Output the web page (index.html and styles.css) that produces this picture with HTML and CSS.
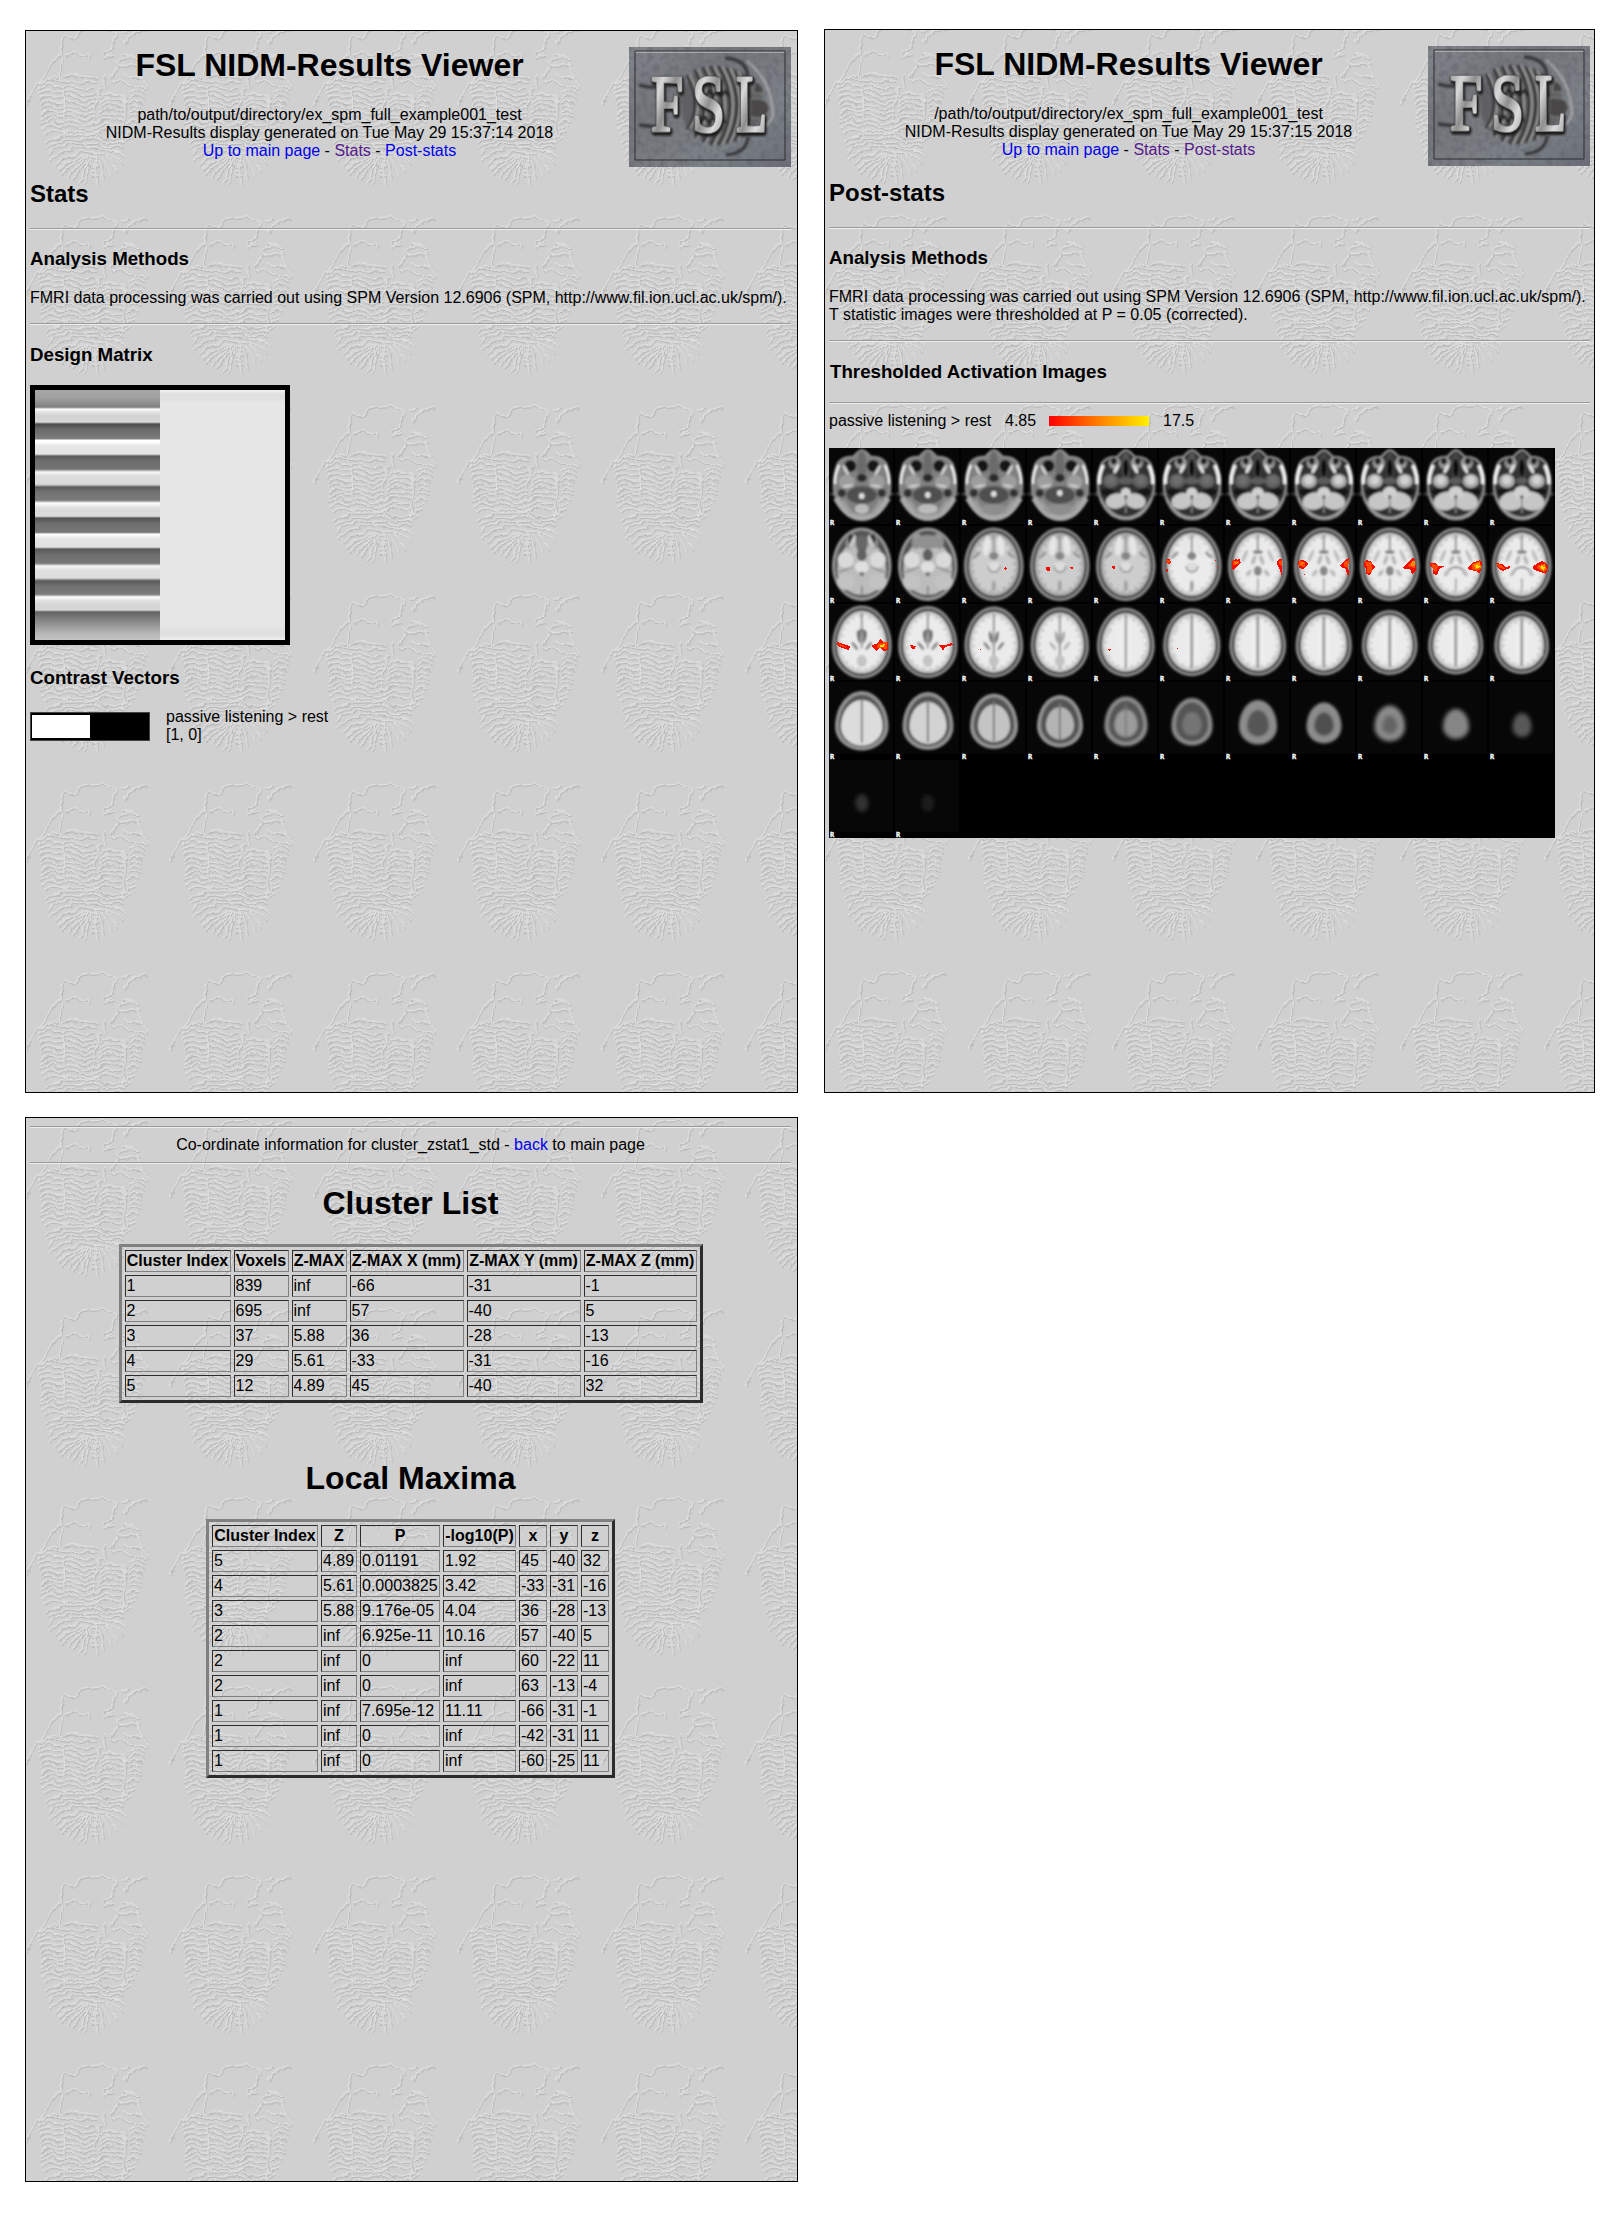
FILE: index.html
```html
<!DOCTYPE html>
<html lang="en">
<head>
<meta charset="utf-8">
<title>FSL NIDM-Results Viewer</title>
<link rel="stylesheet" href="styles.css">
</head>
<body>
<svg class="defs" width="0" height="0" aria-hidden="true">
  <defs>
    <linearGradient id="stone" x1="0" y1="0" x2="1" y2="1">
      <stop offset="0" stop-color="#82848c"/><stop offset=".35" stop-color="#74767b"/><stop offset=".7" stop-color="#7d8288"/><stop offset="1" stop-color="#6a6d77"/>
    </linearGradient>
    <linearGradient id="metal" x1="0" y1="0" x2="1" y2="1">
      <stop offset="0" stop-color="#888"/><stop offset=".3" stop-color="#d8d8d8"/><stop offset=".5" stop-color="#8e8e8e"/><stop offset=".7" stop-color="#dcdcdc"/><stop offset="1" stop-color="#8c8c8c"/>
    </linearGradient>
    <filter id="grain" x="0" y="0" width="100%" height="100%">
      <feTurbulence type="fractalNoise" baseFrequency=".16" numOctaves="3" seed="4"/>
      <feColorMatrix values="0 0 0 0 .12  0 0 0 0 .13  0 0 0 0 .15  1.4 0 0 0 -.55"/>
    </filter>
    <filter id="soft"><feGaussianBlur stdDeviation=".8"/></filter>
    <symbol id="fsl-logo" viewBox="0 0 162 120">
      <rect width="162" height="120" fill="url(#stone)"/>
      <rect width="162" height="120" filter="url(#grain)"/>
      <g filter="url(#soft)" fill="none">
        <path d="M52 50Q58 24 82 19Q112 17 132 40Q138 70 122 86Q104 100 84 98Q62 92 54 72Z" fill="#606163"/>
        <g stroke="#303134" stroke-width="2.6">
          <path d="M58 28Q74 60 58 82M66 23Q84 58 66 90M74 20Q94 58 74 95M82 19Q104 58 82 98M90 19Q112 58 90 98M98 21Q118 58 98 96M106 24Q124 58 106 94M114 28Q128 58 114 88"/>
        </g>
        <g stroke="#a3a3a0" stroke-width="1.6">
          <path d="M61 28Q77 60 61 81M69 22Q87 58 69 91M77 20Q97 58 77 96M85 19Q107 58 85 98M93 19Q115 58 93 98M101 21Q121 58 101 96M109 24Q127 58 109 93"/>
        </g>
        <path d="M72 44l4 6 4-6 4 6 4-6 4 6 4-6 4 6M68 70l4 6 4-6 4 6 4-6 4 6 4-6 4 6" stroke="#242424" stroke-width="2.5"/>
        <path d="M96 11Q118 12 119 30M10 38Q24 42 30 39M10 78L28 80M119 90Q118 106 97 108" stroke="#37383b" stroke-width="3.4"/>
        <path d="M118 14Q143 34 144 68Q140 78 136 78" stroke="#a6a6a8" stroke-width="2.2"/>
        <path d="M126 34Q137 40 134 46L124 46ZM121 52Q142 50 140 64Q135 74 121 70Z" fill="#494647" stroke="#8a8a8a" stroke-width="1"/>
      </g>
      <path d="M6 5H156" fill="none" stroke="#d8d8d8"/>
      <path d="M6 4H156V113H6Z" fill="none" stroke="#2d2f33"/>
      <g class="logo-text" stroke-linejoin="round">
        <g fill="#1d1d1d" stroke="#1d1d1d" stroke-width="6" filter="url(#soft)">
          <text x="23" y="86" textLength="32" lengthAdjust="spacingAndGlyphs">F</text>
          <text x="64" y="86" textLength="33" lengthAdjust="spacingAndGlyphs">S</text>
          <text x="108" y="86" textLength="31" lengthAdjust="spacingAndGlyphs">L</text>
        </g>
        <g fill="#777" stroke="#777" stroke-width="4">
          <text x="22" y="84" textLength="32" lengthAdjust="spacingAndGlyphs">F</text>
          <text x="63" y="84" textLength="33" lengthAdjust="spacingAndGlyphs">S</text>
          <text x="107" y="84" textLength="31" lengthAdjust="spacingAndGlyphs">L</text>
        </g>
        <g fill="url(#metal)" stroke="url(#metal)" stroke-width="2">
          <text x="22" y="84" textLength="32" lengthAdjust="spacingAndGlyphs">F</text>
          <text x="63" y="84" textLength="33" lengthAdjust="spacingAndGlyphs">S</text>
          <text x="107" y="84" textLength="31" lengthAdjust="spacingAndGlyphs">L</text>
        </g>
      </g>
    </symbol>
  </defs>
</svg>

<main class="pages">
  <section class="page">
    <header class="page-header">
      <div class="title">
        <h1>FSL NIDM-Results Viewer</h1>
        <p>path/to/output/directory/ex_spm_full_example001_test<br>
        NIDM-Results display generated on Tue May 29 15:37:14 2018<br>
        <a href="#">Up to main page</a> - <a class="visited" href="#">Stats</a> - <a href="#">Post-stats</a></p>
      </div>
      <svg class="logo"><use href="#fsl-logo"/></svg>
    </header>
    <h2>Stats</h2>
    <hr>
    <h3>Analysis Methods</h3>
    <p>FMRI data processing was carried out using SPM Version 12.6906 (SPM, http://www.fil.ion.ucl.ac.uk/spm/).</p>
    <hr class="after-text">
    <h3 class="spaced">Design Matrix</h3>
    <div class="matrix"><div class="matrix-task"></div><div class="matrix-const"></div></div>
    <h3 class="contrast-title">Contrast Vectors</h3>
    <div class="contrast">
      <div class="vector"><div class="vector-on"></div></div>
      <div>passive listening &gt; rest<br>[1, 0]</div>
    </div>
  </section>

  <section class="page page-right">
    <header class="page-header">
      <div class="title">
        <h1>FSL NIDM-Results Viewer</h1>
        <p>/path/to/output/directory/ex_spm_full_example001_test<br>
        NIDM-Results display generated on Tue May 29 15:37:15 2018<br>
        <a href="#">Up to main page</a> - <a class="visited" href="#">Stats</a> - <a class="visited" href="#">Post-stats</a></p>
      </div>
      <svg class="logo"><use href="#fsl-logo"/></svg>
    </header>
    <h2>Post-stats</h2>
    <hr>
    <h3>Analysis Methods</h3>
    <p>FMRI data processing was carried out using SPM Version 12.6906 (SPM, http://www.fil.ion.ucl.ac.uk/spm/).<br>
    T statistic images were thresholded at P = 0.05 (corrected).</p>
    <hr class="after-text">
    <h3 class="spaced activation-title">Thresholded Activation Images</h3>
    <hr class="after-title">
    <div class="legend">
      <span class="legend-name">passive listening &gt; rest</span>
      <span class="legend-min">4.85</span>
      <span class="ramp"></span>
      <span>17.5</span>
    </div>
    <svg id="montage" class="montage" width="726" height="390" viewBox="0 0 726 390"></svg>
  </section>

  <section class="page page-clusters">
    <hr>
    <p class="coords">Co-ordinate information for cluster_zstat1_std - <a href="#">back</a> to main page</p>
    <hr>
    <h1 class="list-title">Cluster List</h1>
    <table class="cluster-table">
      <colgroup><col class="w106"><col class="w55"><col class="w55"><col class="w114"><col class="w114"><col class="w113"></colgroup>
      <tr><th>Cluster Index</th><th>Voxels</th><th>Z-MAX</th><th>Z-MAX X (mm)</th><th>Z-MAX Y (mm)</th><th>Z-MAX Z (mm)</th></tr>
      <tr><td>1</td><td>839</td><td>inf</td><td>-66</td><td>-31</td><td>-1</td></tr>
      <tr><td>2</td><td>695</td><td>inf</td><td>57</td><td>-40</td><td>5</td></tr>
      <tr><td>3</td><td>37</td><td>5.88</td><td>36</td><td>-28</td><td>-13</td></tr>
      <tr><td>4</td><td>29</td><td>5.61</td><td>-33</td><td>-31</td><td>-16</td></tr>
      <tr><td>5</td><td>12</td><td>4.89</td><td>45</td><td>-40</td><td>32</td></tr>
    </table>
    <h1 class="maxima-title">Local Maxima</h1>
    <table class="maxima-table">
      <colgroup><col class="w106"><col class="w36"><col class="w80"><col class="w73"><col class="w28"><col class="w28"><col class="w28"></colgroup>
      <tr><th>Cluster Index</th><th>Z</th><th>P</th><th>-log10(P)</th><th>x</th><th>y</th><th>z</th></tr>
      <tr><td>5</td><td>4.89</td><td>0.01191</td><td>1.92</td><td>45</td><td>-40</td><td>32</td></tr>
      <tr><td>4</td><td>5.61</td><td>0.0003825</td><td>3.42</td><td>-33</td><td>-31</td><td>-16</td></tr>
      <tr><td>3</td><td>5.88</td><td>9.176e-05</td><td>4.04</td><td>36</td><td>-28</td><td>-13</td></tr>
      <tr><td>2</td><td>inf</td><td>6.925e-11</td><td>10.16</td><td>57</td><td>-40</td><td>5</td></tr>
      <tr><td>2</td><td>inf</td><td>0</td><td>inf</td><td>60</td><td>-22</td><td>11</td></tr>
      <tr><td>2</td><td>inf</td><td>0</td><td>inf</td><td>63</td><td>-13</td><td>-4</td></tr>
      <tr><td>1</td><td>inf</td><td>7.695e-12</td><td>11.11</td><td>-66</td><td>-31</td><td>-1</td></tr>
      <tr><td>1</td><td>inf</td><td>0</td><td>inf</td><td>-42</td><td>-31</td><td>11</td></tr>
      <tr><td>1</td><td>inf</td><td>0</td><td>inf</td><td>-60</td><td>-25</td><td>11</td></tr>
    </table>
  </section>
</main>
<script src="script.js"></script>
</body>
</html>
```
FILE: styles.css
```css
body {
  margin: 0;
  background: #fff;
  color: #000;
  font: 16px/18px "Liberation Sans", Arial, sans-serif;
}

.defs {
  display: block;
}

.pages {
  display: grid;
  grid-template-columns: 773px 771px;
  grid-template-rows: 1063px 1065px;
  column-gap: 26px;
  row-gap: 24px;
  padding: 30px 0 42px 25px;
}

.page {
  box-sizing: border-box;
  border: 1px solid #000;
  padding: 16px 6px 0 4px;
  background-color: #d0d0d0;
  background-position: -14px -19px;
  /* Embossed trilobite tile */
  background-image: url("data:image/svg+xml,%3Csvg xmlns='http://www.w3.org/2000/svg' width='144' height='189'%3E%3Cdefs%3E%3Cfilter id='b' x='0' y='0' width='1' height='1'%3E%3CfeTurbulence type='fractalNoise' baseFrequency='.09' numOctaves='3' seed='7' result='n'/%3E%3CfeDisplacementMap in='SourceGraphic' in2='n' scale='7' xChannelSelector='R' yChannelSelector='G'/%3E%3CfeGaussianBlur stdDeviation='.55'/%3E%3C/filter%3E%3Cg id='l'%3E%3Cpath d='M0 8q7-6 14-3t10 0 12 1 20 0'/%3E%3C/g%3E%3Cg id='m'%3E%3Cpath d='M0 8q7-6 13-4t13 1'/%3E%3C/g%3E%3Cg id='t'%3E%3Cpath d='M63 32q-4 8-4 18-12 10-18 27-12 9-17 26M63 33q10 4 13-3 18-8 34-2 8 8-5 22M60 54q-3 12-1 21 15-3 36 1M63 53q10-3 25 1M87 51v6M102 52l8-7M101 56l10-3M109 50l-5 6M122 42l9-11 14-4M119 30l9-2M112 56q8 6 3 10l-8 11M116 58q10-6 17 0 6 10 9 20l3 9M121 70l7 4 12 2M37 82q12-7 40-2l17-1M108 79q15 0 35 8M99 86q-3 0-2 6l-5 11-1 25 3 7M122 91v38q-2 10-6 13M61 88l1 30M102 72v15M120 52l16 4M118 64l20-2M44 78l12-4'/%3E%3Cuse href='%23l' x='37' y='79'/%3E%3Cuse href='%23l' x='37' y='84'/%3E%3Cuse href='%23l' x='37' y='89'/%3E%3Cuse href='%23l' x='37' y='94'/%3E%3Cuse href='%23l' x='37' y='99'/%3E%3Cuse href='%23l' x='38' y='104'/%3E%3Cuse href='%23l' x='38' y='109'/%3E%3Cuse href='%23l' x='39' y='114'/%3E%3Cuse href='%23l' x='40' y='119'/%3E%3Cuse href='%23l' x='42' y='124'/%3E%3Cuse href='%23m' x='98' y='88'/%3E%3Cuse href='%23m' x='98' y='93'/%3E%3Cuse href='%23m' x='97' y='98'/%3E%3Cuse href='%23m' x='96' y='103'/%3E%3Cuse href='%23m' x='95' y='108'/%3E%3Cuse href='%23m' x='95' y='113'/%3E%3Cuse href='%23m' x='94' y='118'/%3E%3Cuse href='%23m' x='94' y='123'/%3E%3Cpath d='M126 90l6-2 11 3M126 95l6-3 10 4M126 100l6-3 9 4M126 105l6-3 8 3M126 110l6-3 7 3M126 115l5-2 7 2M125 120l6-2 5 2M125 126l8-3M124 132l8-4M121 139l9-5'/%3E%3Cpath d='M44 141q8-8 18-9t16 1 16-2q14 8 30 3M45 147q10-10 20-10t29-1q16 7 28 4M46 153q12-13 22-12t26 0q16 5 27 4M49 158q14-15 45-13 18 3 26 7M53 163q14-15 41-13 16 3 23 9M56 168q13-15 38-14M60 172q10-14 25-16M66 175l16-19M71 178l14-23M77 180l10-24M82 181l7-25M100 154l9 19M103 152l12 17M106 150l14 13M94 150v30M97 156l5 21M112 150l12 4M90 158h7M90 163h7M90 168h7M90 173h6'/%3E%3C/g%3E%3C/defs%3E%3Crect width='144' height='189' fill='%23d0d0d0'/%3E%3Cg fill='none' filter='url(%23b)' stroke-width='1.2'%3E%3Crect width='144' height='189'/%3E%3Cg transform='translate(-9.500 -9.500)'%3E%3Cuse href='%23t' x='.6' y='.9' stroke='%23bcbcbc'/%3E%3Cuse href='%23t' x='-.5' y='-.6' stroke='%23dedede'/%3E%3C/g%3E%3C/g%3E%3C/svg%3E");
}

.page-right {
  margin-top: -1px;
  padding-right: 4px;
}

.page-clusters {
  padding-top: 8px;
  background-position: -14px -14px;
}

.page-header {
  display: flex;
  height: 120px;
}

.title {
  flex: 1;
  text-align: center;
}

.logo {
  width: 162px;
  height: 120px;
}

.logo-text {
  font: 80px "Liberation Serif", serif;
}

h1 {
  margin: 0 0 23px;
  font-size: 32px;
  line-height: 36px;
  text-align: center;
}

h2 {
  margin: 13px 0 20px;
  font-size: 24px;
  line-height: 28px;
}

h3 {
  margin: 18px 0 19px;
  font-size: 18.72px;
  line-height: 22px;
}

h3.spaced {
  margin-top: 19px;
}

h3.contrast-title {
  margin: 22px 0 19px;
}

h3.activation-title {
  padding-left: 1px;
}

p {
  margin: 0;
  white-space: nowrap;
}

a {
  color: #0000ee;
  text-decoration: none;
}

a.visited {
  color: #551a8b;
}

hr {
  height: 0;
  margin: 0;
  border: 0;
  border-top: 1px solid #9a9a9a;
  border-bottom: 1px solid #eee;
}

hr.after-text {
  margin-top: 16px;
}

.matrix {
  display: flex;
  box-sizing: border-box;
  width: 260px;
  height: 260px;
  border: 5px solid #000;
}

.matrix-task {
  width: 125px;
  background: linear-gradient(
    #a6a6a6 0, #a0a0a0 8px, #808080 17px, #aaa 18px,
    #fff 19px, #e2e2e2 22px, #d2d2d2 26px, #d8d8d8 32px, #999 33px,
    #4a4a4a 34px, #686868 39px, #797979 47px, #808080 49px,
    #fff 50px, #fff 52px, #e6e6e6 56px, #e4e4e4 64px, #aaa 65px,
    #585858 66px, #6d6d6d 71px, #737373 79px, #999 80px,
    #f6f6f6 82px, #ddd 86px, #d9d9d9 94px, #aaa 95.5px,
    #595959 97px, #727272 102px, #7b7b7b 110px, #999 111px,
    #fff 113px, #e4e4e4 117px, #d9d9d9 121px, #dcdcdc 126px, #aaa 127px,
    #535353 128px, #6e6e6e 134px, #777 142px, #999 143px,
    #fff 144px, #e5e5e5 149px, #e1e1e1 157px, #aaa 158px,
    #595959 159px, #6e6e6e 165px, #777 173px, #999 174px,
    #f6f6f6 176px, #e0e0e0 180px, #ddd 188px, #aaa 189px,
    #5a5a5a 191px, #717171 196px, #7a7a7a 204px, #999 205px,
    #fff 207px, #dedede 211px, #d4d4d4 216px, #d8d8d8 220px, #999 221px,
    #636363 222px, #7c7c7c 228px, #9a9a9a 236px, #b8b8b8 244px, #c2c2c2 250px);
}

.matrix-const {
  width: 125px;
  background: linear-gradient(#f2f2f2, #e0e0e0 4px, #e0e0e0 9px, #e6e6e6 13px, #e6e6e6 236px, #e0e0e0 241px, #e0e0e0 245px, #f0f0f0 250px);
}

.contrast {
  display: flex;
  gap: 16px;
}

.vector {
  box-sizing: border-box;
  width: 120px;
  height: 29px;
  margin-top: 4px;
  padding: 2px 1px;
  border: 1px solid #444;
  background: #000;
}

.vector-on {
  width: 58px;
  height: 23px;
  background: #fff;
}

hr.after-title {
  margin-bottom: 8px;
}

.legend {
  display: flex;
  align-items: center;
  margin-bottom: 18px;
}

.legend-name {
  width: 176px;
}

.legend-min {
  width: 44px;
}

.ramp {
  width: 100px;
  height: 10px;
  margin-right: 14px;
  background: linear-gradient(90deg, #f00, #ff8000 50%, #fff000);
}

.montage {
  display: block;
  background: #000;
}

.orientation {
  font: bold 7px "DejaVu Sans Mono", monospace;
  fill: #fff;
  stroke: #fff;
  stroke-width: .3px;
}

.coords {
  margin: 8px 0;
  text-align: center;
}

.list-title {
  margin-top: 21px;
}

.maxima-title {
  margin-top: 57px;
}

table {
  table-layout: fixed;
  margin: 0 auto;
  border: 3px solid;
  border-color: #808080 #2c2c2c #2c2c2c #808080;
  border-collapse: separate;
  border-spacing: 3px;
}

.cluster-table { width: 584px; }
.maxima-table { width: 409px; }

.w28 { width: 28px; }
.w36 { width: 36px; }
.w55 { width: 55px; }
.w73 { width: 73px; }
.w80 { width: 80px; }
.w106 { width: 106px; }
.w113 { width: 113px; }
.w114 { width: 114px; }

th,
td {
  height: 18px;
  padding: 1px;
  border: 1px solid;
  border-color: #2c2c2c #808080 #808080 #2c2c2c;
  white-space: nowrap;
}

td {
  text-align: left;
}
```
FILE: script.js
```js
// Axial slice montage: 11 columns of 66x78 tiles, bottom of the head first.
const TILE_W = 66, TILE_H = 78, MID = 32.8;

const el = (x, y, rx, ry, fill, extra = '') =>
  `<ellipse cx="${x}" cy="${y}" rx="${rx}" ry="${ry}" fill="${fill}" ${extra}/>`;
const pair = (dx, y, rx, ry, fill, angle = 0) =>
  el(MID - dx, y, rx, ry, fill, `transform="rotate(${angle} ${MID - dx} ${y})"`) +
  el(MID + dx, y, rx, ry, fill, `transform="rotate(${-angle} ${MID + dx} ${y})"`);
const path = (d, fill, stroke = 'none', w = 0, extra = '') =>
  `<path d="${d}" fill="${fill}" stroke="${stroke}" stroke-width="${w}" ${extra}/>`;

// Egg outline; `wide` is the fraction of the height where it is widest.
function egg(l, r, t, b, wide, fill, stroke = 'none', w = 0, extra = '') {
  const m = (l + r) / 2, y = t + (b - t) * wide, kx = (r - l) * 0.27;
  const up = y - (y - t) * 0.56, dn = y + (b - y) * 0.56;
  return path(`M${m} ${t}C${m + kx} ${t} ${r} ${up} ${r} ${y}C${r} ${dn} ${m + kx} ${b} ${m} ${b}` +
    `C${m - kx} ${b} ${l} ${dn} ${l} ${y}C${l} ${up} ${m - kx} ${t} ${m} ${t}Z`, fill, stroke, w, extra);
}

function skullBase(c) {
  const late = c >= 4, k = c / 10;
  let s = el(MID, 46, 33, 4, '#3a3a3a');
  s += path('M9 15Q14 8 24 9Q30 2 33 2Q36 2 42 9Q52 8 57 15Q62 28 61 42Q58 60 46 68Q33 75 20 68Q8 60 5 42Q4 28 9 15Z',
    late ? '#333' : '#808080', '#8e8e8e', 2.2);
  s += path('M10 17Q5 28 6 36M56 17Q61 28 60 36', 'none', '#f0f0f0', late ? 4 : 2.6);
  s += path('M7 50Q18 70 33 70Q48 70 59 50', 'none', late ? '#999' : '#a8a8a8', late ? 2.5 : 6);
  if (!late) {
    s += pair(15, 34, 8, 7, '#9d9d9d') + pair(11.5, 18, 6, 6, '#141414');
    s += pair(16, 22, 1.5, 6, '#d5d5d5', -28);
    s += el(MID, 18, 4.5, 15, '#6a6a6a') + el(MID, 30, 5, 4, '#2a2a2a');
    s += el(MID, 47, 15, 9, '#505050') + pair(20, 45, 4, 4, '#303030');
    s += pair(14, 38, 6, 1.2, '#d0d0d0', -10);
    s += el(MID, 48 - c, 2.8, 3, '#e0e0e0') + el(MID, 61, 7 + c * 3, 5, c > 1 ? '#8e8e8e' : '#bbb');
    s += path('M14 52L23 66M52 52L43 66', 'none', '#999', 3);
  } else {
    s += pair(15, 33, 8, 7, c < 7 ? '#606060' : '#aaa') + pair(15, 32, 4.5, 4.5, c < 7 ? '#6e6e6e' : '#d2d2d2');
    s += pair(11, 15, 6, 6, '#999') + pair(12, 13, 3, 3.5, '#222') + pair(9.5, 21, 1.8, 5, '#e2e2e2', 28);
    s += el(MID, 18, 4.2, 14, c < 6 ? '#555' : '#444') + el(MID, 20, 2.8, 9, '#111');
    s += el(MID, 33, 11 - k * 5, 3.5, '#5c5c5c');
    s += pair(17, 45, 8, 4, '#171717', 15);
    s += pair(9.5, 53, 9 + k * 4, 6.5 + k * 3, '#c6c6c6', -10);
    s += el(MID, 45, 3 + k * 5, 4 + k * 3, '#d0d0d0');
    s += path(`M${MID} 50V65`, 'none', '#888', 1.5) + el(MID, 49, 1.8, 2, '#666');
  }
  return s;
}

function brain(l, r, t, b, wide, tone, edge) {
  return egg(l, r, t, b, wide, '#8c8c8c') + egg(l + 2.6, r - 2.6, t + 2.6, b - 2.6, wide, '#484848') +
    egg(l + 5.2, r - 5.2, t + 5.5, b - 5.2, wide, edge) +
    egg(l + 8, r - 8, t + 9, b - 8.5, wide, tone) +
    egg(l + 9, r - 9, t + 10, b - 9, wide, 'none', edge, 3, 'stroke-dasharray="2 5 3 4"');
}

function lowHead(c) {
  let s = egg(3, 62.5, 1.5, 75, .53, '#949494') + egg(6, 59.5, 4.5, 71.5, .55, '#555') +
    egg(8.5, 57, 14, 69, .55, '#bcbcbc');
  s += pair(11, 15, 5, 8, '#8e8e8e', 12) + pair(11, 13, 3, 5, c ? '#999' : '#333');
  s += c ? el(MID, 16, 14, 7, '#909090') : pair(9, 16, 2, 7, '#ccc', 22) + el(MID, 18, 6, 9, '#666');
  s += el(MID, 29, 5, 6, '#606060');
  s += pair(16, 34, 8, 8, '#dadada') + pair(16, 56, 9, 8, '#c2c2c2') + el(MID, 41, 7, 6, '#e0e0e0');
  s += pair(17, 44, 9, 1.2, '#999', -20) + el(MID, 48, 2.4, 2.2, '#777') + path(`M${MID} 60V69`, 'none', '#777', 1.4);
  return s;
}

function midHead(row, c) {
  const n = row === 1 ? c : c + 11;
  const t = row === 1 ? 1.5 : 1.5 + c * .55, b = row === 1 ? 75 : 74.5 - c * .45;
  const l = row === 1 ? 3 : 3 + c * .23, r = row === 1 ? 62.5 : 62.7 - c * .27;
  let s = brain(l, r, t, b, row === 1 ? .53 : .56, n < 5 ? '#cdcdcd' : '#ebebeb', n < 5 ? '#b0b0b0' : '#cdcdcd');
  s += path(`M${MID} ${t + 7}V${n < 13 ? 26 : b - 8}`, 'none', '#959595', n > 15 ? 2.6 : 2);
  if (n < 6) {
    s += pair(7, 20, 3.5, 10, '#e6e6e6', 6) + pair(17, 29, 5, 1.6, '#999', -40);
    s += el(MID, 30, 4.5, 4, '#858585') + el(MID, 41, 6, 5, '#ddd');
    s += path('M27 40Q28 46 33 46Q38 46 39 40', 'none', '#888', 1.4) + el(MID, 60, 2, 6, '#a2a2a2');
  } else if (n < 11) {
    s += pair(13, 30, 2, 7, '#c0c0c0', 24) + el(MID, 26, 5, 2, '#888') + pair(4, 34, 2, 5, '#b8b8b8', 20);
    s += n < 9 ? el(MID, 45, 4, 5, '#888') : path('M22 49Q25 42 33 41Q41 42 44 49', 'none', '#8c8c8c', 2);
    s += pair(9, 47, 2, 4, '#bbb', 35) + path(`M${MID} 52V67`, 'none', '#a8a8a8', 1.8);
  } else if (n < 15) {
    s += n < 13 ? el(MID, 29, 5, 4, '#7a7a7a') : '';
    s += pair(3.2, 33, 1.6, 6, n < 14 ? '#707070' : '#a5a5a5', -10) + pair(7, 42, 1.6, 5, n < 14 ? '#858585' : '#b5b5b5', -38);
    s += el(MID, 36, 1.5, 9, '#999') + el(MID, 57, 5, 6, '#c4c4c4');
  } else {
    s += pair(4.5, 38, 1, 20, '#f2f2f2') + pair(17, 28, 1.5, 4, '#cfcfcf', 50) + pair(18, 52, 1.5, 4, '#cfcfcf', -50);
  }
  return s;
}

// [left, right, top, bottom, centre tone] of the slices near the vertex.
const TOP = [
  [6, 59.5, 9, 68.5, '#dcdcdc'], [7.5, 58.5, 10, 68, '#d2d2d2'], [9, 57, 11.5, 67, '#c4c4c4'],
  [10, 56, 13, 65.5, '#b4b4b4'], [11.5, 54.5, 14.5, 64, '#9c9c9c'], [12.5, 53.5, 16, 63.5, '#757575'],
  [14, 52, 18, 62.5, '#565656'], [15.5, 50.5, 20.5, 61.5, '#505050'], [17.5, 48, 23.5, 59.5, '#646464'],
  [20, 46, 27, 57, '#858585'], [23.5, 42.5, 31, 55, '#585858'],
];

function topHead(c) {
  const [l, r, t, b, tone] = TOP[c];
  if (c > 8) return egg(l, r, t, b, .6, tone);
  if (c > 5) {
    const j = 8 - (c - 6) * .3;
    return egg(l, r, t, b, .6, '#8c8c8c') + egg(l + j, r - j, t + j + 2, b - j, .6, tone);
  }
  const j = 6 + c;
  let s = egg(l, r, t, b, .6, '#909090') + egg(l + 4, r - 4, t + 4, b - 4, .6, '#555');
  s += egg(l + j, r - j, t + j + 3, b - j + 1, .58, tone);
  if (c < 5) s += path(`M${MID} ${t + 8}V${b - 8}`, 'none', '#777', 1.8);
  return s;
}

// Activation clusters per tile: [colour, polygon points]
const RED = '#f60a00', ORANGE = '#ff4800', AMBER = '#ff8a00', YELLOW = '#ffe000';
const ACTIVE = {
  '1,2': [[RED, '44,41 45,41 45,42 46,42 46,43 45,43 45,44 44,44 44,43 43,43 43,42 44,42']],
  '1,3': [[RED, '19,41 23,41 23,44 22,45 20,45 19,44'], [RED, '43,41 46,41 46,43 44,43']],
  '1,4': [[RED, '19,40 22,40 22,42 21,43 19,42']],
  '1,5': [[RED, '8,33 11,33 12,36 10,38 7,37'], [ORANGE, '8,34 11,34 11,37 8,37'], [RED, '7,43 9,43 9,46 7,45'], [RED, '56,34 57,34 57,35 56,35'], [RED, '58,41 59,41 59,42 58,42']],
  '1,6': [[RED, '7,35 11,33 13,34 14,32 16,37 12,40 8,44 7,42'], [ORANGE, '8,35 14,35 14,38 8,39'], [AMBER, '10,36 13,36 12,38 10,38'], [RED, '52,35 55,33 57,33 57,51 55,44 52,38'], [ORANGE, '54,35 57,34 57,40 54,38']],
  '1,7': [[RED, '7,35 11,34 15,35 17,38 12,43 8,42'], [ORANGE, '8,35 14,36 14,41 8,40'], [AMBER, '8,37 13,36 11,39'], [RED, '12,48 15,48 13,49'], [RED, '49,39 55,33 58,32 57,39 58,49 56,49 55,43 50,41'], [ORANGE, '53,36 58,34 57,42 53,40']],
  '1,8': [[RED, '7,36 9,34 15,36 16,39 18,41 15,44 13,49 9,48 9,43 7,41'], [ORANGE, '8,36 15,36 15,46 10,47 10,41'], [RED, '46,41 55,32 58,33 59,45 55,48 53,43 47,43'], [ORANGE, '51,39 57,33 58,42 52,41'], [AMBER, '55,35 58,35 58,40 54,40']],
  '1,9': [[RED, '7,37 12,37 16,40 21,40 21,41 17,42 14,49 10,48 10,43 7,40'], [ORANGE, '8,38 15,39 14,45 11,45'], [RED, '45,41 51,36 57,34 59,37 58,44 56,48 53,45 46,44'], [ORANGE, '49,38 57,35 58,43 54,45 49,43'], [AMBER, '51,38 57,36 58,42 52,43'], [YELLOW, '53,39 57,40 56,42 53,42']],
  '1,10': [[RED, '7,37 13,38 17,41 21,40 21,42 14,45 9,42'], [ORANGE, '8,38 13,39 16,43 10,42'], [RED, '44,40 53,35 57,37 59,41 57,48 51,46 44,43'], [ORANGE, '48,40 56,37 58,43 55,46 49,43'], [AMBER, '50,40 56,38 57,43 54,45'], [YELLOW, '52,40 56,41 55,44 52,43']],
  '2,0': [[RED, '8,38 14,40 21,42 20,46 13,44 8,41'], [ORANGE, '9,39 16,42 17,44 11,42'], [RED, '43,41 49,39 51,35 54,38 59,38 59,46 55,47 51,44 47,47 43,43'], [ORANGE, '49,39 58,38 58,45 52,44 48,44'], [YELLOW, '51,41 56,40 55,43 51,43']],
  '2,1': [[RED, '15,41 21,42 20,45 17,45'], [RED, '43,41 50,41 57,39 58,41 50,43 48,47 46,43']],
  '2,2': [[RED, '18,46 20,44 20,46']],
  '2,4': [[RED, '15,45 18,45 16,47 15,46']],
  '2,5': [[RED, '17,44 19,44 19,46 18,45']],
};

function tile(row, c) {
  const dim = row === 3 || row === 4;
  let body;
  if (row === 0) body = skullBase(c);
  else if (row === 1 && c < 2) body = lowHead(c);
  else if (row < 3) body = midHead(row, c);
  else if (row === 3) body = topHead(c);
  else body = el(MID, 43, 6.5, 9, c ? '#1b1b1b' : '#303030');
  const blur = row === 4 || (row === 3 && c > 7) ? 'blur-more' : row === 3 && c > 3 ? 'blur-mid' : 'blur';
  const spots = (ACTIVE[`${row},${c}`] || [])
    .map(([fill, pts]) => `<polygon points="${pts}" fill="${fill}"/>`).join('');
  return `<svg x="${c * TILE_W}" y="${row * TILE_H}" width="${TILE_W}" height="${TILE_H}">` +
    `<rect width="64" height="${dim ? 72 : 76}" fill="#070707"/>` +
    `<g filter="url(#${blur})">${body}</g>` +
    `<g shape-rendering="crispEdges">${spots}</g>` +
    `<text class="orientation" x="1" y="77">R</text></svg>`;
}

let out = '<defs><filter id="blur"><feGaussianBlur stdDeviation="1"/></filter>' +
  '<filter id="blur-mid"><feGaussianBlur stdDeviation="1.5"/></filter>' +
  '<filter id="blur-more" x="-50%" y="-50%" width="200%" height="200%"><feGaussianBlur stdDeviation="2.2"/></filter></defs>';
for (let row = 0; row < 5; row++) {
  for (let c = 0; c < (row === 4 ? 2 : 11); c++) out += tile(row, c);
}
document.getElementById('montage').innerHTML = out;
```
